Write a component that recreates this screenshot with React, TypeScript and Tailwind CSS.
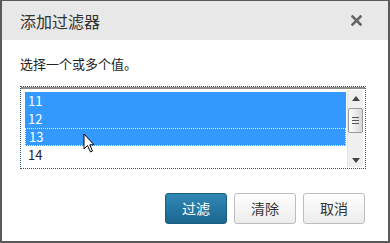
import React from 'react';

const font = { fontFamily: '"Noto Sans CJK SC", "Liberation Sans", sans-serif' };

const rows = [
  { v: '11', sel: true },
  { v: '12', sel: true },
  { v: '13', sel: true, focus: true },
  { v: '14', sel: false },
];

function Scrollbar() {
  return (
    <div className="flex w-[16px] flex-col items-center bg-[#f0f0f0] border-l border-[#e4e4e4]">
      <div className="flex h-[16px] w-full items-center justify-center">
        <svg width="8" height="5" viewBox="0 0 8 5">
          <path d="M0 5 L4 0 L8 5 Z" fill="#444" />
        </svg>
      </div>
      <div className="mt-[2px] flex h-[25px] w-[15px] flex-col items-center justify-center gap-[2px] rounded-[2px] border border-[#9a9a9a] bg-gradient-to-r from-[#fdfdfd] to-[#d8d8d8]">
        <div className="h-px w-[7px] bg-[#555]" />
        <div className="h-px w-[7px] bg-[#555]" />
        <div className="h-px w-[7px] bg-[#555]" />
      </div>
      <div className="flex-1" />
      <div className="flex h-[14px] w-full items-center justify-center">
        <svg width="8" height="5" viewBox="0 0 8 5">
          <path d="M0 0 L8 0 L4 5 Z" fill="#444" />
        </svg>
      </div>
    </div>
  );
}

export default function App() {
  return (
    <div className="h-[243px] w-[390px] bg-white" style={font}>
      <div className="relative flex h-full flex-col border-x-2 border-t border-b-2 border-[#5a5a5a]">
        <header className="flex h-[39px] items-center justify-between bg-[#e8e8e8] pl-[18px] pr-[26px]">
          <h1 className="text-[16px] font-normal text-[#333]">添加过滤器</h1>
          <svg width="11" height="11" viewBox="0 0 11 11">
            <path d="M1.5 1.5 L9.5 9.5 M9.5 1.5 L1.5 9.5" stroke="#666" strokeWidth="2.6" strokeLinecap="square" />
          </svg>
        </header>

        <div className="flex flex-1 flex-col px-[18px] pt-[16px] pb-[17px]">
          <p className="h-[16px] text-[13px] leading-[16px] text-[#222]">选择一个或多个值。</p>

          <div className="mt-[14px] h-[83px] w-[346px] border border-dotted border-[#2d5a72]">
            <div className="flex h-full border-t-2 border-[#8a8a8a]">
              <div className="flex-1 pt-[3px] pl-[4px]">
                {rows.map((r) => (
                  <div
                    key={r.v}
                    className={`flex h-[18px] items-center px-[3px] text-[13px] ${
                      r.sel ? 'bg-[#3399ff] text-white' : 'text-[#222]'
                    } ${r.focus ? 'border border-dotted border-white' : ''}`}
                  >
                    {r.v}
                  </div>
                ))}
              </div>
              <div className="py-px pr-[2px] pl-px">
                <div className="flex h-full">
                  <Scrollbar />
                </div>
              </div>
            </div>
          </div>

          <div className="mt-[24px] flex justify-end gap-[7px] pr-[5px]">
            <button className="h-[31px] w-[62px] rounded-[3px] border border-[#1a5c80] bg-gradient-to-b from-[#3088b5] to-[#1c6790] text-[14px] text-white">
              过滤
            </button>
            <button className="h-[31px] w-[62px] rounded-[3px] border border-[#bdbdbd] bg-gradient-to-b from-white to-[#ececec] text-[14px] text-[#333]">
              清除
            </button>
            <button className="h-[31px] w-[62px] rounded-[3px] border border-[#bdbdbd] bg-gradient-to-b from-white to-[#ececec] text-[14px] text-[#333]">
              取消
            </button>
          </div>
        </div>

        <svg className="absolute left-[81px] top-[132px]" width="13" height="21" viewBox="0 0 13 21">
          <path d="M1 1 L1 16 L4.5 12.5 L7.5 19 L9.5 18 L6.8 11.8 L11 11.8 Z" fill="white" stroke="black" strokeWidth="1" strokeLinejoin="miter" />
        </svg>
      </div>
    </div>
  );
}
